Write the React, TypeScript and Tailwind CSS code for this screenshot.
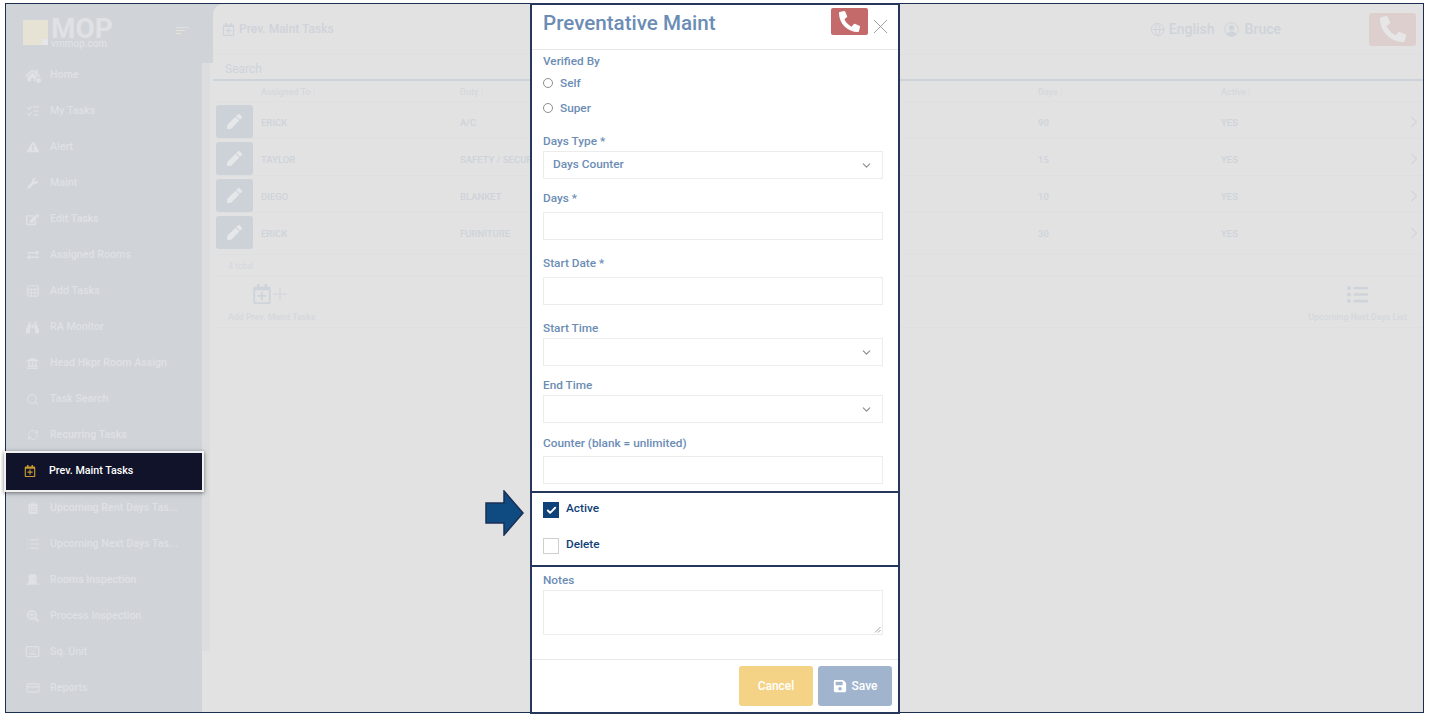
import { ReactNode } from 'react'
import { ChevronDown, ChevronRight, CreditCard, Keyboard, List, ListChecks, RefreshCw, Search, Sheet, X, Globe, Plus, Check } from 'lucide-react'
import {
    FaBinoculars,
    FaClipboardList,
    FaDoorClosed,
    FaEdit,
    FaExchangeAlt,
    FaExclamationTriangle,
    FaHome,
    FaLandmark,
    FaListUl,
    FaPen,
    FaPhoneAlt,
    FaRegCalendarPlus,
    FaSave,
    FaSearchPlus,
    FaWrench,
} from 'react-icons/fa'

const homeIcon = (
    <span className="relative flex">
        <FaHome size={15} />
        <span className="absolute -bottom-[1px] -right-[2px] h-[7px] w-[7px] rounded-full border border-[#d0d3d8] bg-[#dfe1e5]" />
    </span>
)

const navItems: { label: string; icon: ReactNode; active?: boolean }[] = [
    { label: 'Home', icon: homeIcon },
    { label: 'My Tasks', icon: <ListChecks size={14} /> },
    { label: 'Alert', icon: <FaExclamationTriangle size={12} /> },
    { label: 'Maint', icon: <FaWrench size={11} /> },
    { label: 'Edit Tasks', icon: <FaEdit size={13} /> },
    { label: 'Assigned Rooms', icon: <FaExchangeAlt size={12} /> },
    { label: 'Add Tasks', icon: <Sheet size={14} /> },
    { label: 'RA Monitor', icon: <FaBinoculars size={13} /> },
    { label: 'Head Hkpr Room Assign', icon: <FaLandmark size={11} /> },
    { label: 'Task Search', icon: <Search size={13} /> },
    { label: 'Recurring Tasks', icon: <RefreshCw size={12} /> },
    { label: 'Prev. Maint Tasks', icon: <FaRegCalendarPlus size={12} />, active: true },
    { label: 'Upcoming Rent Days Tas...', icon: <FaClipboardList size={12} /> },
    { label: 'Upcoming Next Days Tas...', icon: <List size={14} /> },
    { label: 'Rooms Inspection', icon: <FaDoorClosed size={13} /> },
    { label: 'Process Inspection', icon: <FaSearchPlus size={12} /> },
    { label: 'Sq. Unit', icon: <Keyboard size={15} /> },
    { label: 'Reports', icon: <CreditCard size={14} /> },
]

const rows = [
    { name: 'ERICK', duty: 'A/C', days: '90', height: 'h-[37px]' },
    { name: 'TAYLOR', duty: 'SAFETY / SECURITY', days: '15', height: 'h-[37px]' },
    { name: 'DIEGO', duty: 'BLANKET', days: '10', height: 'h-[37px]' },
    { name: 'ERICK', duty: 'FURNITURE', days: '30', height: 'h-[42px]' },
]

function Sidebar() {
    return (
        <aside className="flex h-full w-[207px] shrink-0 flex-col bg-[#d0d3d8]">
            <div className="flex h-[53px] shrink-0 items-start">
                <div className="relative ml-[17px] mt-[16px] h-[25px] w-[25px] bg-[#e6e2d4]">
                    <div className="absolute bottom-0 right-0 h-[6px] w-[6px] bg-[#e4e6e9]" />
                </div>
                <div className="ml-[3px] mt-[15px] flex flex-col">
                    <span className="h-[20px] text-[28px] font-bold leading-[20px] text-[#dfe1e5]">MOP</span>
                    <span className="text-[10px] font-medium leading-[10px] text-[#dfe1e5]">vmmop.com</span>
                </div>
                <div className="ml-[63px] mt-[23px] flex flex-col gap-[2px]">
                    <div className="h-[1px] w-[13px] bg-[#dfe1e5]" />
                    <div className="h-[1px] w-[9px] bg-[#e6e2d4]" />
                    <div className="h-[1px] w-[5px] bg-[#e6e2d4]" />
                </div>
            </div>
            <div className="flex min-h-0 flex-1">
                <nav className="flex w-[196px] shrink-0 flex-col">
                    {navItems.map((item) =>
                        item.active ? (
                            <div
                                key={item.label}
                                className="relative z-10 -mb-[2px] -ml-[2px] -mt-[3px] flex h-[41px] w-[200px] items-center border-2 border-[#f1f1f1] bg-[#10132a] shadow-[0_1px_4px_rgba(0,0,0,0.5)]"
                            >
                                <span className="flex w-[43px] justify-center pl-[5px] text-[#c99a2e]">{item.icon}</span>
                                <span className="text-[10.7px] font-medium text-white">{item.label}</span>
                            </div>
                        ) : (
                            <div key={item.label} className="flex h-[36.05px] items-center text-[#dfe1e5]">
                                <span className="flex w-[44px] justify-center pl-[9px]">{item.icon}</span>
                                <span className="whitespace-nowrap text-[10.7px] font-medium">{item.label}</span>
                            </div>
                        ),
                    )}
                </nav>
                <div className="mt-[6px] flex w-[11px] shrink-0 bg-[#e2e2e2]">
                    <div className="h-[588px] w-[8px] bg-[#dcdddf]" />
                </div>
            </div>
        </aside>
    )
}

function UserIcon({ className = '' }: { className?: string }) {
    return (
        <svg width="15" height="15" viewBox="0 0 15 15" className={className}>
            <circle cx="7.5" cy="7.5" r="6.8" fill="none" stroke="currentColor" strokeWidth="1" />
            <circle cx="7.5" cy="5.8" r="2.6" fill="currentColor" />
            <path d="M2.8 12.4C3.6 10 5.4 9.2 7.5 9.2s3.9.8 4.7 3.2A6.8 6.8 0 0 1 2.8 12.4Z" fill="currentColor" />
        </svg>
    )
}

function MainPanel() {
    const muted = 'text-[#cfd3da]'
    return (
        <main className="flex h-full min-w-0 flex-1 flex-col rounded-tl-[10px] bg-[#e2e2e2]">
            <header className="flex h-[51px] shrink-0 items-center border-b border-[#dedfe0] pl-[9px] pr-[7px]">
                <FaRegCalendarPlus size={13} className={muted} />
                <span className={`ml-[4px] text-[12px] font-medium ${muted}`}>Prev. Maint Tasks</span>
                <div className="ml-auto flex items-center">
                    <Globe size={15} strokeWidth={1.5} className={muted} />
                    <span className={`ml-[4px] text-[14px] font-medium ${muted}`}>English</span>
                    <UserIcon className={`ml-[9px] ${muted}`} />
                    <span className={`ml-[6px] text-[14px] font-medium ${muted}`}>Bruce</span>
                    <div className="ml-[88px] flex h-[33px] w-[47px] items-center justify-center rounded-[3px] bg-[#dccfce]">
                        <FaPhoneAlt size={26} className="text-[#e6e6e6]" />
                    </div>
                </div>
            </header>
            <div className="flex h-[26px] shrink-0 items-center border-b-2 border-[#ced3da] pl-[12px] pt-[3px]">
                <span className={`text-[12px] ${muted}`}>Search</span>
            </div>
            <div className="grid h-[21px] shrink-0 grid-cols-[48px_199px_578px_183px_1fr] items-center border-b border-[#dedfe0] pt-[4px] text-[9px] font-medium text-[#d5d8dc]">
                <span />
                <span>Assigned To ⁝</span>
                <span>Duty ⁝</span>
                <span>Days ⁝</span>
                <span>Active ⁝</span>
            </div>
            {rows.map((row, i) => (
                <div
                    key={i}
                    className={`grid shrink-0 grid-cols-[48px_199px_578px_183px_1fr] items-start border-b border-[#dedfe0] text-[9.5px] font-medium leading-[12px] ${row.height} ${muted}`}
                >
                    <div className="ml-[3px] mt-[3px] flex h-[33px] w-[37px] items-center justify-center rounded-[3px] bg-[#cdd2d9]">
                        <FaPen size={15} className="text-[#e6e7e9]" />
                    </div>
                    <span className="mt-[15px]">{row.name}</span>
                    <span className="mt-[15px]">{row.duty}</span>
                    <span className="mt-[15px]">{row.days}</span>
                    <div className="flex items-start justify-between">
                        <span className="mt-[15px]">YES</span>
                        <ChevronRight size={20} strokeWidth={1.2} className="-mr-[1px] mt-[10px] text-[#c8ccd3]" />
                    </div>
                </div>
            ))}
            <div className="flex h-[22px] shrink-0 items-center border-b border-[#dedfe0] pl-[15px] pt-[2px] text-[9px] text-[#d5d8dc]">4 total</div>
            <div className="flex h-[51px] shrink-0 items-start justify-between border-b border-[#dedfe0] pl-[15px] pr-[16px] pt-[6px] text-[8.8px] font-medium text-[#d5d8dc]">
                <div className="flex flex-col items-center">
                    <div className="flex h-[22px] items-center">
                        <FaRegCalendarPlus size={20} className="text-[#cfd3da]" />
                        <Plus size={22} strokeWidth={1.1} className="-ml-[3px] text-[#cfd3da]" />
                    </div>
                    <span className="mt-[6px] whitespace-nowrap">Add Prev. Maint Tasks</span>
                </div>
                <div className="flex flex-col items-center">
                    <div className="flex h-[22px] items-center">
                        <FaListUl size={21} className="text-[#cfd3da]" />
                    </div>
                    <span className="mt-[6px] whitespace-nowrap">Upcoming Next Days List</span>
                </div>
            </div>
        </main>
    )
}

function Label({ children, className = '' }: { children: ReactNode; className?: string }) {
    return <div className={`text-[11.8px] font-medium leading-[14px] text-[#6b8db5] ${className}`}>{children}</div>
}

function Box({ children, className = '' }: { children?: ReactNode; className?: string }) {
    return <div className={`flex h-[28px] items-center justify-between border border-[#ececec] pl-[9px] pr-[9px] ${className}`}>{children}</div>
}

function Radio({ label, className = '' }: { label: string; className?: string }) {
    return (
        <div className={`flex h-[14px] items-center ${className}`}>
            <span className="h-[10px] w-[10px] rounded-full border border-[#8d8d8d] bg-white" />
            <span className="ml-[7px] text-[11.8px] font-medium leading-[14px] text-[#6b8db5]">{label}</span>
        </div>
    )
}

function Modal() {
    return (
        <div className="absolute left-[524px] top-[-1px] z-20 flex h-[711px] w-[370px] flex-col border-2 border-[#25375c] bg-white">
            <div className="flex h-[45px] shrink-0 items-start border-b border-[#e8e8e8] pl-[11px] pr-[5px]">
                <h2 className="mt-[5px] text-[20.6px] font-medium leading-[26px] text-[#6b8db5]">Preventative Maint</h2>
                <div className="ml-auto mt-[3px] flex h-[27px] w-[37px] items-center justify-center rounded-[2px] bg-[#c46a6a]">
                    <FaPhoneAlt size={21} className="text-white" />
                </div>
                <X size={25} strokeWidth={0.9} className="mt-[9px] text-[#9a9a9a]" />
            </div>
            <div className="flex flex-1 flex-col pl-[11px] pr-[15px]">
                <Label className="mt-[4px]">Verified By</Label>
                <Radio label="Self" className="mt-[8px]" />
                <Radio label="Super" className="mt-[11px]" />
                <Label className="mt-[19px]">Days Type *</Label>
                <Box className="mt-[3px]">
                    <span className="text-[11.8px] font-medium text-[#6b8db5]">Days Counter</span>
                    <ChevronDown size={13} className="text-[#8b8b8b]" />
                </Box>
                <Label className="mt-[12px]">Days *</Label>
                <Box className="mt-[7px]" />
                <Label className="mt-[16px]">Start Date *</Label>
                <Box className="mt-[7px]" />
                <Label className="mt-[16px]">Start Time</Label>
                <Box className="mt-[3px]">
                    <span />
                    <ChevronDown size={13} className="text-[#8b8b8b]" />
                </Box>
                <Label className="mt-[12px]">End Time</Label>
                <Box className="mt-[3px]">
                    <span />
                    <ChevronDown size={13} className="text-[#8b8b8b]" />
                </Box>
                <Label className="mt-[13px]">Counter (blank = unlimited)</Label>
                <Box className="mt-[6px]" />
                {/* highlighted checkboxes */}
                <div className="relative -ml-[11px] -mr-[15px] mt-[7px] h-[76px] border-y-2 border-[#25375c] pl-[11px]">
                    <div className="flex h-[36px] items-start pt-[8px]">
                        <span className="mt-[1px] flex h-[16px] w-[16px] items-center justify-center bg-[#0f4279]">
                            <Check size={11} strokeWidth={4} className="text-white" />
                        </span>
                        <span className="ml-[7px] text-[11.8px] font-medium leading-[14px] text-[#0f4279]">Active</span>
                    </div>
                    <div className="flex h-[36px] items-start">
                        <span className="mt-[9px] h-[16px] w-[16px] border border-[#cfcfcf]" />
                        <span className="ml-[7px] mt-[8px] text-[11.8px] font-medium leading-[14px] text-[#0f4279]">Delete</span>
                    </div>
                </div>
                <Label className="mt-[6px]">Notes</Label>
                <div className="relative mt-[3px] h-[45px] border border-[#ececec]">
                    <svg width="7" height="7" viewBox="0 0 7 7" className="absolute bottom-[1px] right-[1px] text-[#8b8b8b]">
                        <path d="M1 6.5 6.5 1M4 6.5 6.5 4" stroke="currentColor" strokeWidth="0.8" />
                    </svg>
                </div>
            </div>
            <div className="flex h-[53px] shrink-0 items-start justify-end gap-[5px] border-t border-[#e8e8e8] pr-[6px] pt-[6px]">
                <button className="flex h-[40px] w-[74px] items-center justify-center rounded-[3px] bg-[#f4d386] text-[12px] font-medium text-white">Cancel</button>
                <button className="flex h-[40px] w-[74px] items-center justify-center gap-[5px] rounded-[3px] bg-[#a0b4cd] text-[12px] font-medium text-white">
                    <FaSave size={14} />
                    Save
                </button>
            </div>
        </div>
    )
}

export default function App() {
    return (
        <div className="h-[718px] w-[1429px] overflow-hidden bg-white pl-[5px] pt-[3px] font-['Roboto',sans-serif]">
            <div className="relative flex h-[710px] w-[1419px] border border-[#1d2d50] bg-[#d0d3d8]">
                <Sidebar />
                <MainPanel />
                <Modal />
                {/* callout arrow */}
                <svg width="39" height="46" viewBox="0 0 39 46" className="absolute left-[479px] top-[486px] z-30">
                    <path d="M1 13H19V1L38 23 19 45V33H1Z" fill="#0f4a80" stroke="#1b2f55" strokeWidth="1.5" />
                </svg>
            </div>
        </div>
    )
}
